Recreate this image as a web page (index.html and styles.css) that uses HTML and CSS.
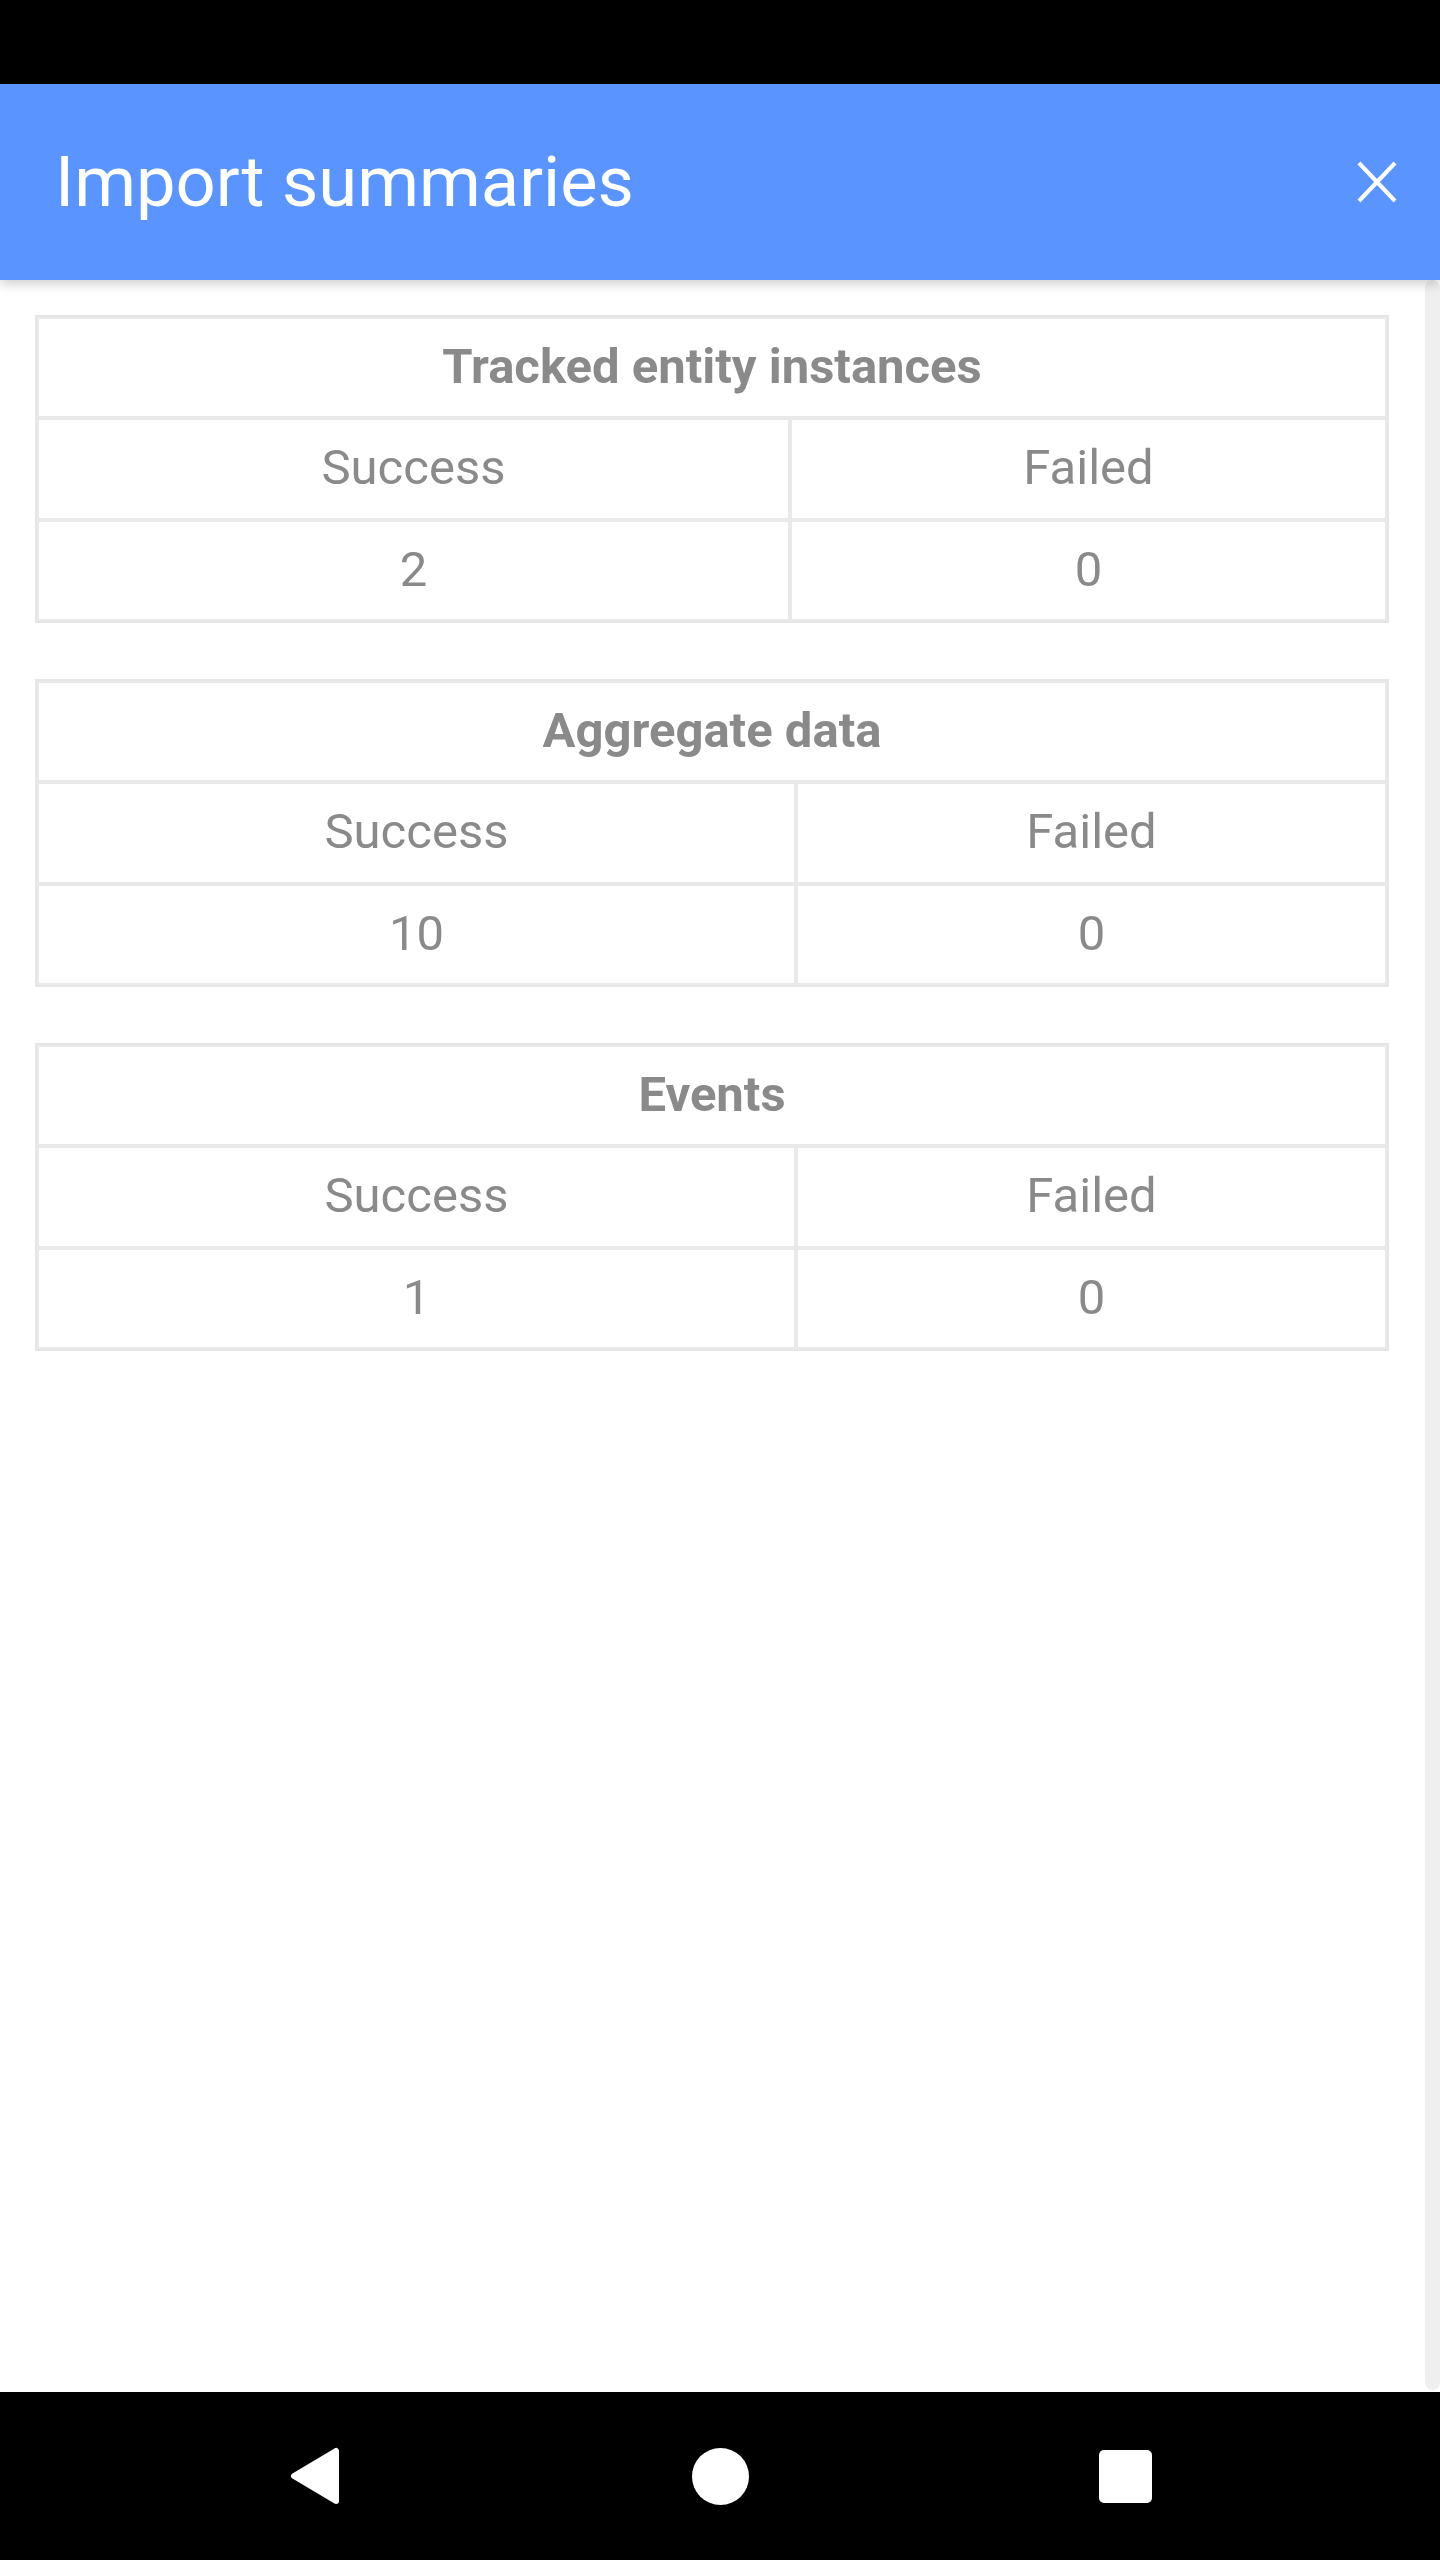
FILE: index.html
```html
<!DOCTYPE html>
<html lang="en">
<head>
<meta charset="utf-8">
<title>Import summaries</title>
<link rel="stylesheet" href="styles.css">
</head>
<body>
<div class="screen">
  <div class="status-bar"></div>
  <header class="app-bar">
    <h1 class="app-title">Import summaries</h1>
    <button class="close-btn" aria-label="Close">
      <svg viewBox="0 0 40 42" width="40" height="42">
        <line x1="2" y1="2" x2="38" y2="40" stroke="#fff" stroke-width="4"/>
        <line x1="38" y1="2" x2="2" y2="40" stroke="#fff" stroke-width="4"/>
      </svg>
    </button>
  </header>
  <div class="body">
    <main class="content">
      <table class="summary">
        <tr><th colspan="2">Tracked entity instances</th></tr>
        <tr><td>Success</td><td>Failed</td></tr>
        <tr><td>2</td><td>0</td></tr>
      </table>
      <table class="summary summary-wide">
        <tr><th colspan="2">Aggregate data</th></tr>
        <tr><td>Success</td><td>Failed</td></tr>
        <tr><td>10</td><td>0</td></tr>
      </table>
      <table class="summary summary-wide">
        <tr><th colspan="2">Events</th></tr>
        <tr><td>Success</td><td>Failed</td></tr>
        <tr><td>1</td><td>0</td></tr>
      </table>
    </main>
    <div class="scrollbar"></div>
  </div>
  <nav class="nav-bar">
    <div class="nav-slot">
      <svg viewBox="0 0 50 58" width="50" height="58"><path d="M46 4 L46 54 L4 29 Z" fill="#fff" stroke="#fff" stroke-width="6" stroke-linejoin="round"/></svg>
    </div>
    <div class="nav-slot">
      <div class="nav-circle"></div>
    </div>
    <div class="nav-slot">
      <div class="nav-square"></div>
    </div>
  </nav>
</div>
</body>
</html>
```

FILE: styles.css
```css
html, body {
  margin: 0;
  padding: 0;
  background: #fff;
}
.screen {
  width: 1440px;
  height: 2560px;
  display: flex;
  flex-direction: column;
  font-family: Roboto, "Liberation Sans", sans-serif;
}
.status-bar {
  height: 84px;
  background: #000;
  flex: none;
}
.app-bar {
  height: 196px;
  flex: none;
  background: #5a95ff;
  display: flex;
  align-items: center;
  justify-content: space-between;
  padding: 0 43px 0 55px;
  box-sizing: border-box;
  box-shadow: 0 3px 12px rgba(0,0,0,0.22);
  position: relative;
  z-index: 2;
}
.app-title {
  margin: 0;
  color: #fff;
  font-weight: 400;
  font-size: 70.5px;
  line-height: 1;
  letter-spacing: 0;
}
.close-btn {
  background: none;
  border: 0;
  padding: 0;
  width: 40px;
  height: 42px;
  display: flex;
}
.body {
  flex: 1;
  display: flex;
  min-height: 0;
}
.content {
  flex: 1;
  padding: 35px 36px 0 35px;
}
.scrollbar {
  width: 15px;
  flex: none;
  background: #efefef;
  border-radius: 8px;
  margin-bottom: 2px;
}
.summary {
  width: 100%;
  border-collapse: separate;
  border-spacing: 0;
  border: 2px solid #e6e6e6;
  margin-bottom: 56px;
  color: #8a8a8a;
  font-size: 49px;
}
.summary th,
.summary td {
  border: 2px solid #e9e9e9;
  text-align: center;
  padding: 19px 0 21px;
  line-height: 57.33px;
}
.summary th {
  font-weight: 700;
}
.summary td {
  font-weight: 400;
  box-sizing: border-box;
}
.summary td:first-child {
  width: 753px;
}
.summary-wide td:first-child {
  width: 759px;
}
.nav-bar {
  height: 168px;
  flex: none;
  background: #000;
  display: flex;
  align-items: center;
  padding-left: 255px;
  gap: 285px;
}
.nav-slot {
  width: 120px;
  height: 60px;
  display: flex;
  align-items: center;
  justify-content: center;
}
.nav-circle {
  width: 57px;
  height: 57px;
  border-radius: 50%;
  background: #fff;
}
.nav-square {
  width: 53px;
  height: 53px;
  border-radius: 5px;
  background: #fff;
}
```
